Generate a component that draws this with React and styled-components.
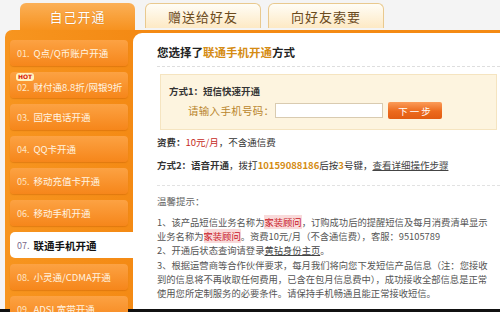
import React from "react";
import styled, { createGlobalStyle } from "styled-components";

const GlobalStyle = createGlobalStyle`
  html, body {
    margin: 0;
    padding: 0;
    background: #f4f4f4;
  }
  body {
    font-family: "Noto Sans CJK SC", "DejaVu Sans", sans-serif;
  }
`;

const Page = styled.div`
  display: flex;
  flex-direction: column;
  width: 500px;
  height: 312px;
  overflow: hidden;
  background: #f4f4f4;
`;

const TabBar = styled.div`
  display: flex;
  align-items: flex-end;
  height: 30px;
  padding-left: 20px;
  gap: 10px;
  flex-shrink: 0;
`;

const Tab = styled.div`
  display: flex;
  align-items: center;
  justify-content: center;
  box-sizing: border-box;
  width: ${(p) => (p.$active ? "115px" : "116px")};
  height: ${(p) => (p.$active ? "27px" : "25px")};
  margin-bottom: ${(p) => (p.$active ? "0" : "2px")};
  margin-right: ${(p) => (p.$active ? "0" : "-3px")};
  border-radius: 6px 6px 0 0;
  font-size: 13px;
  letter-spacing: 1px;
  background: ${(p) =>
    p.$active
      ? "linear-gradient(#fbb057, #f7921f)"
      : "linear-gradient(#fffdf6, #fde9c4)"};
  border: ${(p) => (p.$active ? "none" : "1px solid #e9c98e")};
  border-bottom: none;
  color: ${(p) => (p.$active ? "#fff" : "#6b4a1c")};
  text-shadow: ${(p) => (p.$active ? "0 0 1px #c96a0a" : "none")};
`;

const Body = styled.div`
  display: flex;
  flex: 1;
  min-height: 0;
`;

const Sidebar = styled.div`
  display: flex;
  flex-direction: column;
  gap: 6px;
  width: 128px;
  margin-left: 5px;
  padding: 10px 0 0 5px;
  box-sizing: border-box;
  background: linear-gradient(90deg, #f7951f, #f48a14);
  border-radius: 7px 0 0 0;
  flex-shrink: 0;
`;

const Item = styled.div`
  position: relative;
  display: flex;
  align-items: ${(p) => (p.$hot ? "flex-end" : "center")};
  box-sizing: border-box;
  height: 26px;
  margin-right: ${(p) => (p.$active ? "0" : "5px")};
  padding: ${(p) => (p.$hot ? "0 0 4px 7px" : "0 0 0 7px")};
  border-radius: ${(p) => (p.$active ? "5px 0 0 5px" : "4px")};
  background: ${(p) =>
    p.$active ? "#fff" : "linear-gradient(#fca243, #f6861a)"};
  box-shadow: ${(p) => (p.$active ? "none" : "0 1px 1px rgba(190,90,0,0.35)")};
  color: ${(p) => (p.$active ? "#111" : "#fff4e2")};
  font-size: 9.5px;
  white-space: nowrap;
  flex-shrink: 0;
`;

const Num = styled.span`
  margin-right: 4px;
  color: ${(p) => (p.$active ? "#7a6a8a" : "#ffe6c4")};
  font-size: 9px;
`;

const ItemLabel = styled.span`
  font-weight: ${(p) => (p.$active ? "bold" : "normal")};
  font-size: ${(p) => (p.$active ? "10.5px" : "9.5px")};
`;

const HotBadge = styled.span`
  position: absolute;
  left: 6px;
  top: 1px;
  padding: 0 2px;
  border-radius: 3px;
  background: #fff3c0;
  color: #d8200a;
  font-family: "DejaVu Sans", sans-serif;
  font-size: 6px;
  font-weight: bold;
  line-height: 8px;
`;

const ContentWrap = styled.div`
  flex: 1;
  padding-top: 3px;
  background: #f48a14;
  min-width: 0;
`;

const Content = styled.div`
  height: 100%;
  box-sizing: border-box;
  padding: 11px 0 0 24px;
  background: #fff;
  border-radius: 9px 0 0 0;
  color: #333;
`;

const Title = styled.div`
  font-size: 11.5px;
  font-weight: bold;
  color: #222;
  line-height: 16px;
  padding-bottom: 6px;
  border-bottom: 1px dashed #dedede;
`;

const Gold = styled.span`
  color: #d58c14;
  font-weight: bold;
`;

const Red = styled.span`
  color: #c52a1c;
`;

const Box = styled.div`
  margin: 7px 3px 0 3px;
  height: 56px;
  box-sizing: border-box;
  padding: 9px 0 0 8px;
  background: #fdf4df;
  border: 1px solid #f5e4c0;
`;

const BoxTitle = styled.div`
  font-size: 9.5px;
  font-weight: bold;
  color: #333;
  line-height: 14px;
`;

const InputRow = styled.div`
  display: flex;
  align-items: center;
  margin-top: 4px;
  padding-left: 19px;
`;

const InputLabel = styled.span`
  font-size: 10.5px;
  color: #b9852c;
  letter-spacing: 0.3px;
`;

const PhoneInput = styled.div`
  width: 108px;
  height: 15px;
  box-sizing: border-box;
  margin-left: 1px;
  border: 1px solid #d9cbb0;
  background: #fff;
`;

const NextButton = styled.div`
  display: flex;
  align-items: center;
  justify-content: center;
  width: 54px;
  height: 17px;
  margin-left: 5px;
  border-radius: 2px;
  background: linear-gradient(#fb9c5a, #ec6a1d 55%, #e25c12);
  color: #fff;
  font-size: 9.5px;
  letter-spacing: 2px;
`;

const Line = styled.div`
  font-size: 9.5px;
  line-height: 14px;
  color: #333;
  margin-top: ${(p) => p.$mt || 0}px;
  white-space: nowrap;
`;

const Bold = styled.span`
  font-weight: bold;
`;

const Link = styled.span`
  text-decoration: underline;
  color: #444;
`;

const Divider = styled.div`
  margin-top: 13px;
  border-top: 1px dashed #e2e2e2;
`;

const Tips = styled.div`
  margin-top: 8px;
  font-size: 9.5px;
  line-height: 14px;
  color: #666;
`;

const Notes = styled.div`
  margin-top: 7px;
  font-size: 9.3px;
  line-height: 14.2px;
  color: #555;
  white-space: nowrap;
`;

const Mark = styled.span`
  color: #c8141e;
  background: #f9dada;
`;

const BottomEdge = styled.div`
  height: 3px;
  background: #111;
  flex-shrink: 0;
`;

const items = [
  { n: "01.", label: "Q点/Q币账户开通" },
  { n: "02.", label: "财付通8.8折/网银9折", hot: true },
  { n: "03.", label: "固定电话开通" },
  { n: "04.", label: "QQ卡开通" },
  { n: "05.", label: "移动充值卡开通" },
  { n: "06.", label: "移动手机开通" },
  { n: "07.", label: "联通手机开通", active: true },
  { n: "08.", label: "小灵通/CDMA开通" },
  { n: "09.", label: "ADSL宽带开通" },
];

export default function App() {
  return (
    <Page>
      <GlobalStyle />
      <TabBar>
        <Tab $active>自己开通</Tab>
        <Tab>赠送给好友</Tab>
        <Tab>向好友索要</Tab>
      </TabBar>
      <Body>
        <Sidebar>
          {items.map((it) => (
            <Item key={it.n} $active={it.active} $hot={it.hot}>
              {it.hot && <HotBadge>HOT</HotBadge>}
              <Num $active={it.active}>{it.n}</Num>
              <ItemLabel $active={it.active}>{it.label}</ItemLabel>
            </Item>
          ))}
        </Sidebar>
        <ContentWrap>
          <Content>
            <Title>
              您选择了<Gold>联通手机开通</Gold>方式
            </Title>
            <Box>
              <BoxTitle>方式1：短信快速开通</BoxTitle>
              <InputRow>
                <InputLabel>请输入手机号码：</InputLabel>
                <PhoneInput />
                <NextButton>下一步</NextButton>
              </InputRow>
            </Box>
            <Line $mt={5}>
              <Bold>资费：</Bold>
              <Red>10元/月</Red>，不含通信费
            </Line>
            <Line $mt={9}>
              <Bold>方式2：语音开通</Bold>，拨打<Gold>10159088186</Gold>后按
              <Gold>3</Gold>号键，<Link>查看详细操作步骤</Link>
            </Line>
            <Divider />
            <Tips>温馨提示：</Tips>
            <Notes>
              1、该产品短信业务名称为<Mark>家装顾问</Mark>，订购成功后的提醒短信及每月消费清单显示
              <br />
              业务名称为<Mark>家装顾问</Mark>。资费10元/月（不含通信费），客服：95105789
              <br />
              2、开通后状态查询请登录<Link>黄钻身份主页</Link>。
              <br />
              3、根据运营商等合作伙伴要求，每月我们将向您下发短信产品信息（注：您接收
              <br />
              到的信息将不再收取任何费用，已含在包月信息费中），成功接收全部信息是正常
              <br />
              使用您所定制服务的必要条件。请保持手机畅通且能正常接收短信。
            </Notes>
          </Content>
        </ContentWrap>
      </Body>
      <BottomEdge />
    </Page>
  );
}
